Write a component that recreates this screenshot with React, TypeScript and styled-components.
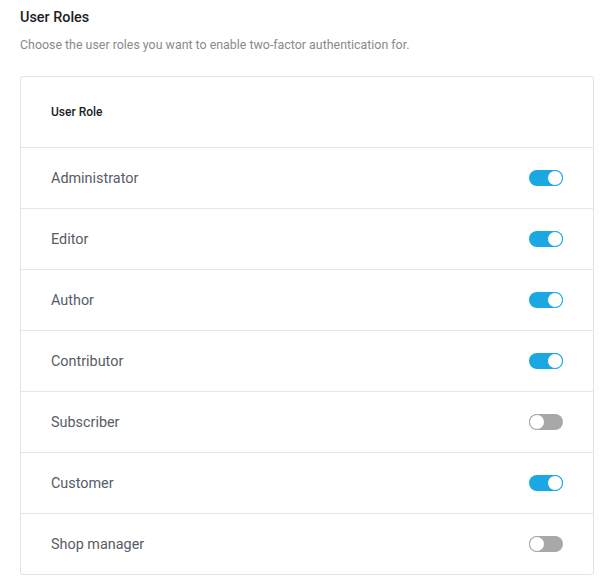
import styled, { createGlobalStyle } from 'styled-components'

const GlobalStyle = createGlobalStyle`
  html, body {
    margin: 0;
    padding: 0;
    background: #ffffff;
    font-family: Roboto, 'Liberation Sans', sans-serif;
  }
`

const Page = styled.div`
  padding: 8px 16px 0 20px;
  width: 610px;
  box-sizing: border-box;
`

const Title = styled.h2`
  margin: 0;
  font-size: 14.4px;
  font-weight: 500;
  color: #1e1e1e;
  line-height: 20px;
`

const Subtitle = styled.p`
  margin: 8px 0 0;
  font-size: 12.4px;
  color: #8a8a8a;
  line-height: 18px;
`

const Card = styled.div`
  margin-top: 22px;
  border: 1px solid #e2e2e2;
  border-radius: 3px;
  background: #ffffff;
`

const HeaderRow = styled.div`
  height: 70px;
  display: flex;
  align-items: center;
  padding: 0 30px;
  font-size: 12px;
  font-weight: 500;
  color: #1e1e1e;
`

const Row = styled.div`
  height: 60px;
  display: flex;
  align-items: center;
  justify-content: space-between;
  padding: 0 30px;
  border-top: 1px solid #e6e6e6;
`

const Label = styled.span`
  font-size: 14.4px;
  color: #555d66;
`

const Toggle = styled.span<{ $on: boolean }>`
  position: relative;
  width: 34px;
  height: 16px;
  border-radius: 8px;
  background: ${(p) => (p.$on ? '#1ba7e1' : '#a8a8a8')};
  box-sizing: border-box;

  &::after {
    content: '';
    position: absolute;
    top: 0;
    left: ${(p) => (p.$on ? '18px' : '0')};
    width: 16px;
    height: 16px;
    border-radius: 50%;
    box-sizing: border-box;
    background: #ffffff;
    border: 1px solid ${(p) => (p.$on ? '#1ba7e1' : '#a8a8a8')};
  }
`

const roles = [
  { name: 'Administrator', on: true },
  { name: 'Editor', on: true },
  { name: 'Author', on: true },
  { name: 'Contributor', on: true },
  { name: 'Subscriber', on: false },
  { name: 'Customer', on: true },
  { name: 'Shop manager', on: false },
]

export default function App() {
  return (
    <>
      <GlobalStyle />
      <Page>
        <Title>User Roles</Title>
        <Subtitle>Choose the user roles you want to enable two-factor authentication for.</Subtitle>
        <Card>
          <HeaderRow>User Role</HeaderRow>
          {roles.map((role) => (
            <Row key={role.name}>
              <Label>{role.name}</Label>
              <Toggle $on={role.on} />
            </Row>
          ))}
        </Card>
      </Page>
    </>
  )
}
